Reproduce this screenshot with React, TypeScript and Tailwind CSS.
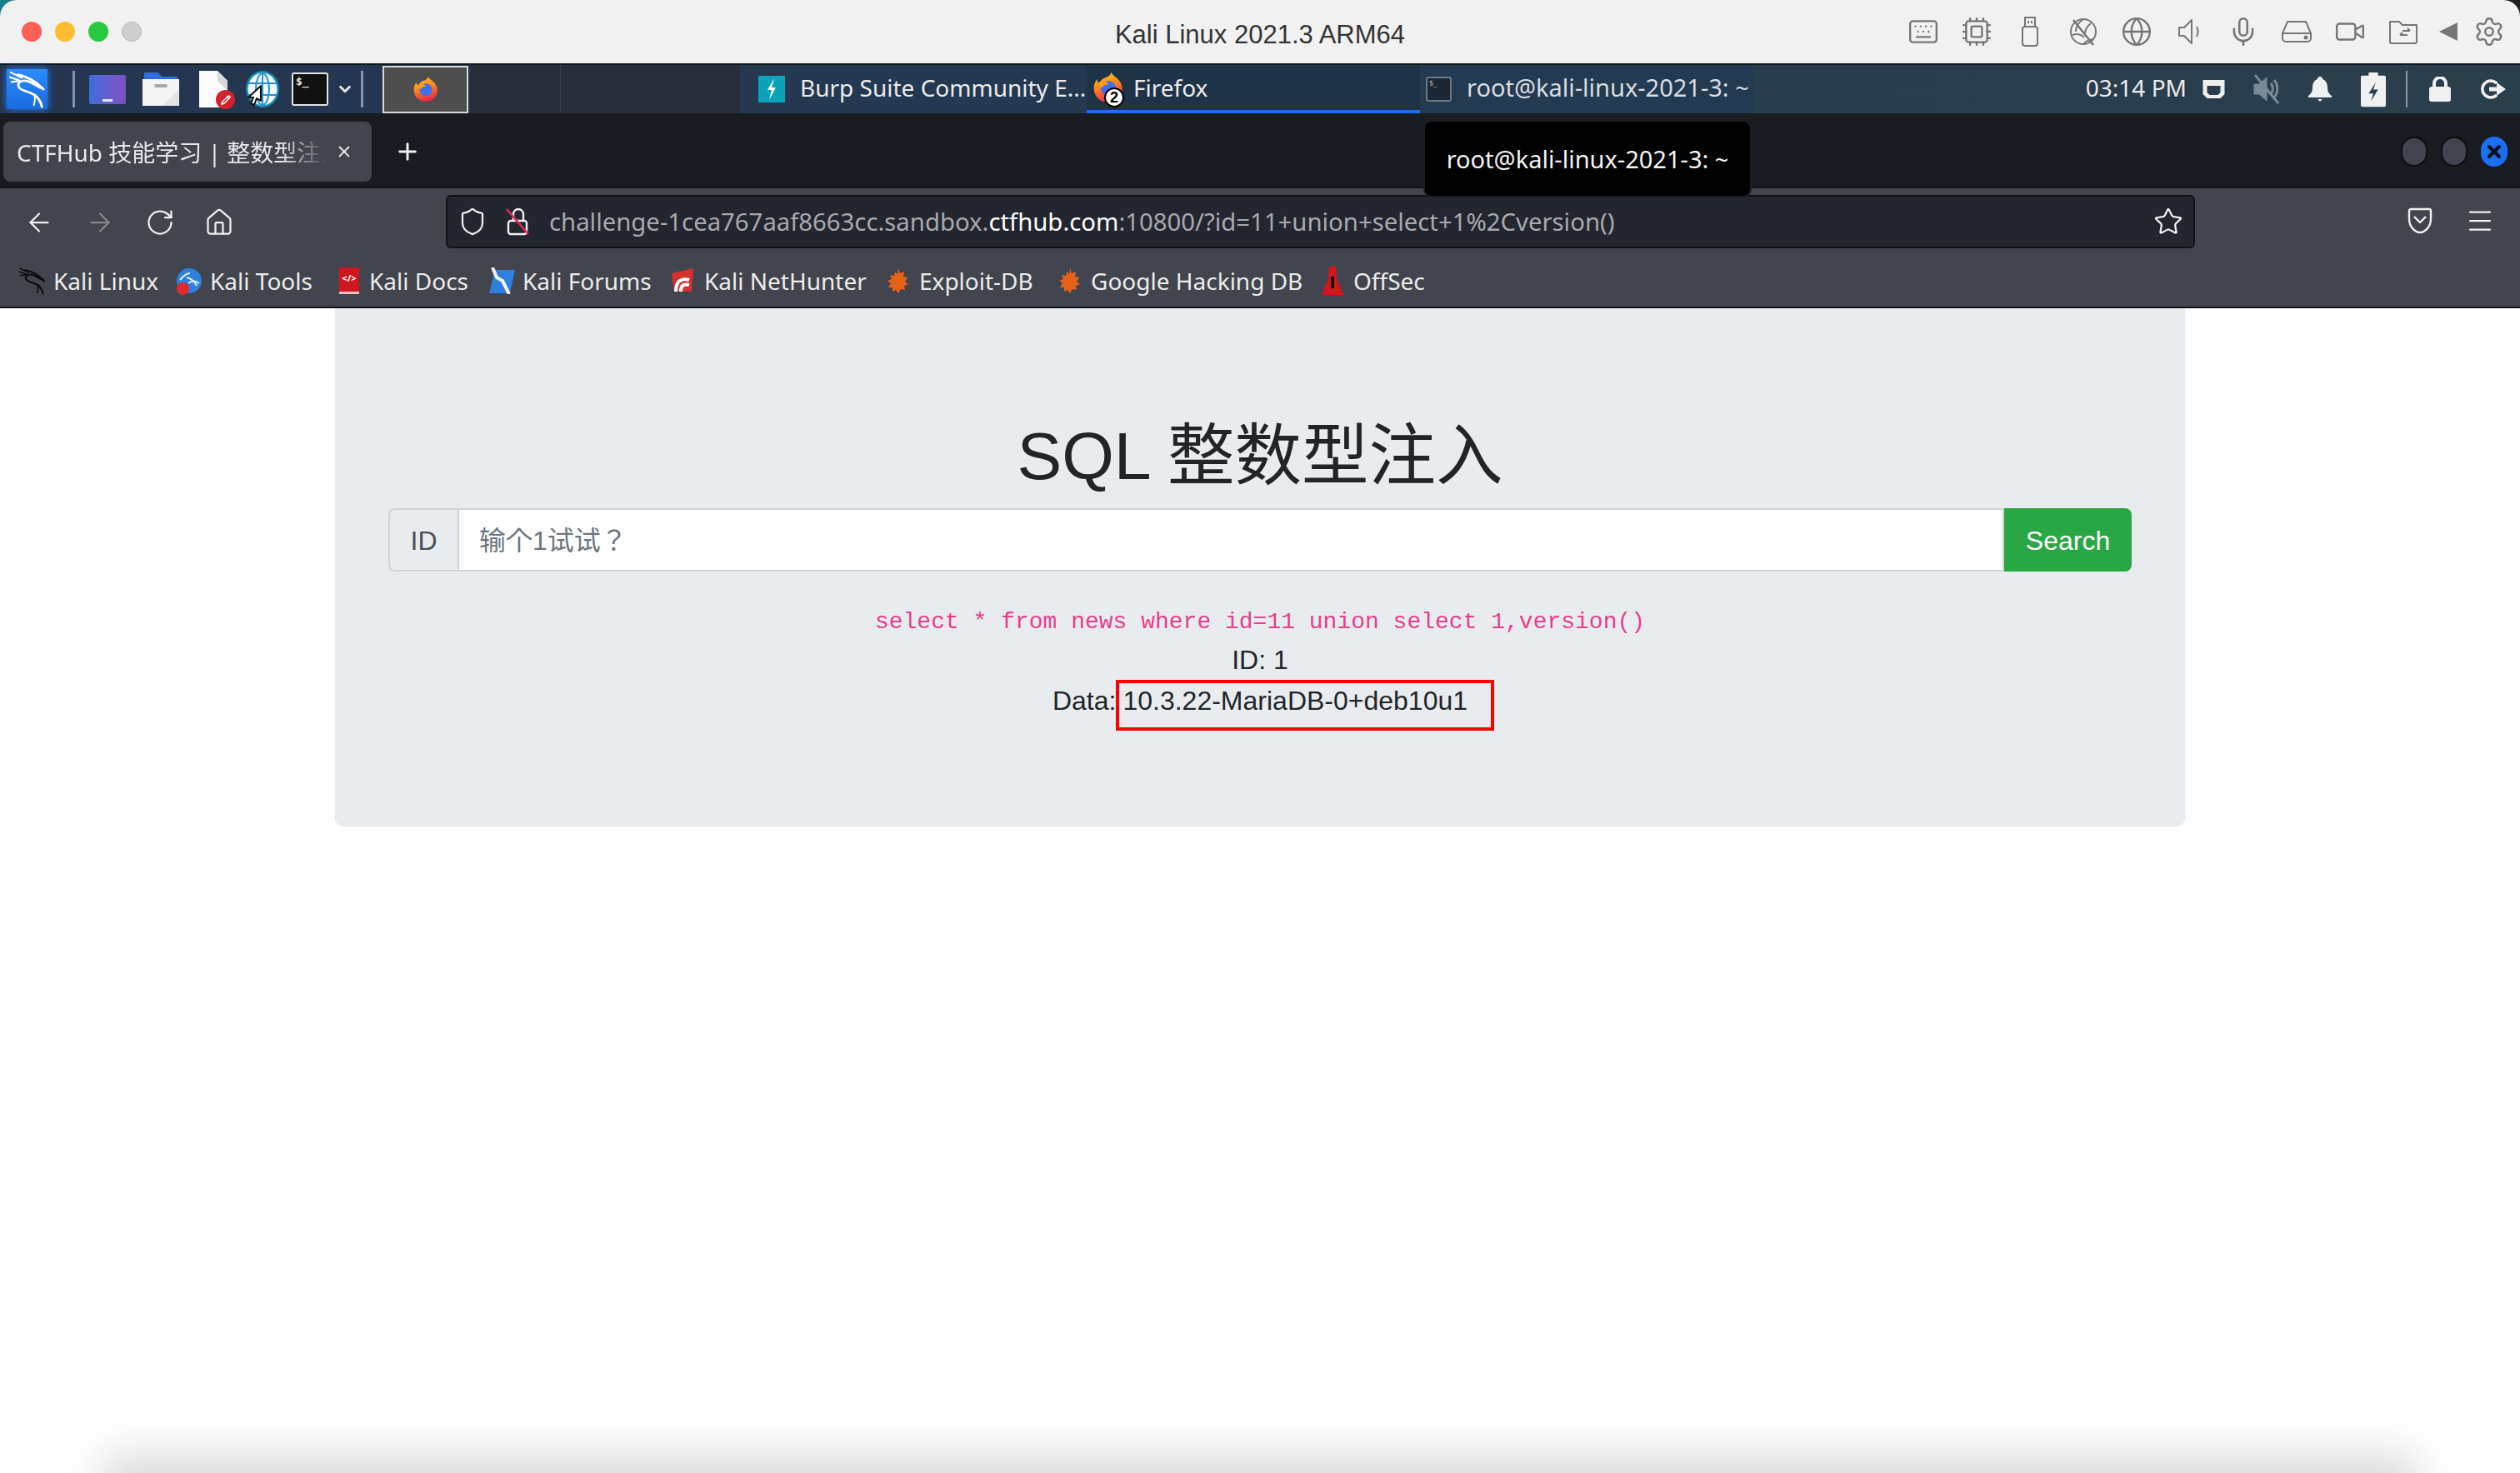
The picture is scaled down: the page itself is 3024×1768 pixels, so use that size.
import React from "react";
import { ArrowLeft, ArrowRight, RotateCw, House, Shield, Star, Menu, Keyboard, Cpu, Globe, Mic, Video, Settings, Plus, X, ChevronDown, Pencil } from "lucide-react";

const sans = "font-['Liberation_Sans','Noto_Sans_CJK_SC',sans-serif]";
const ui = "font-['Noto_Sans','Noto_Sans_CJK_SC',sans-serif]";

function Firefox({ s = 40 }: { s?: number }) {
  return (
    <svg width={s} height={s} viewBox="0 0 40 40">
      <defs>
        <linearGradient id="ffg" x1="0.3" y1="0" x2="0.6" y2="1">
          <stop offset="0" stopColor="#ffc21f" />
          <stop offset="0.5" stopColor="#ff7a1f" />
          <stop offset="1" stopColor="#e5244f" />
        </linearGradient>
      </defs>
      <path d="M24 0c1 4 9 7 12 13 5 9 2 20-6 24-9 5-20 3-26-5C-1 24 0 15 5 9c0 3 1 5 3 6 1-5 6-8 10-9 3-1 5-3 6-6z" fill="url(#ffg)" />
      <circle cx="20" cy="21" r="10" fill="#3f6fe8" />
      <path d="M7 13c6-3 11-2 13 3-4 0-7 1-8 4-2-1-5-3-5-7z" fill="#ff9a1f" />
    </svg>
  );
}

function KaliDragon({ color = "white", w = 48 }: { color?: string; w?: number }) {
  return (
    <svg width={w} height={w} viewBox="0 0 48 48" fill="none" stroke={color} strokeWidth="3" strokeLinecap="round" strokeLinejoin="round">
      <path d="M3 3l14 7M2 9l12 4M4 15l8-1" strokeWidth="2.2" />
      <path d="M12 6c12 2 22 8 32 18-8-3-13-8-20-10-8-2-13 2-11 7 2 6 14 5 22 12 4 4 6 8 7 13" />
      <path d="M33 32c1 5 0 9-1 12" strokeWidth="2" />
    </svg>
  );
}

function LauncherIcons() {
  return (
    <div className="flex items-center h-full w-[564px] bg-[#253650] relative">
      <div className="ml-[8px] w-[49px] h-[48px] bg-gradient-to-b from-[#2a8cff] to-[#1a6be0] shadow-[0_0_8px_#2a7fff] flex items-center justify-center">
        <KaliDragon w={46} />
      </div>
      <div className="ml-[30px] w-[3px] h-[44px] bg-[#8b94a0]" />
      <div className="ml-[17px] w-[44px] h-[35px] rounded-[2px] bg-gradient-to-r from-[#3a6de0] to-[#7d4fc0] flex items-end justify-center pb-[3px]">
        <span className="w-[12px] h-[3px] bg-[#dfe6ff]" />
      </div>
      <svg className="ml-[20px]" width="44" height="40" viewBox="0 0 44 40">
        <path d="M2 0h17l4 5h19v4H2z" fill="#2f6fe0" />
        <path d="M0 8h44v32H0z" fill="#f4f4f4" />
        <path d="M44 20v20H24z" fill="#e4e4e4" />
        <rect x="14" y="14" width="16" height="4" rx="2" fill="#a8a8a8" />
      </svg>
      <div className="ml-[24px] relative w-[40px] h-[44px]">
        <svg width="34" height="44" viewBox="0 0 34 44">
          <path d="M0 0h22l12 12v32H0z" fill="#fafafa" />
          <path d="M22 0l12 12v12L22 12z" fill="#d8d8d8" />
        </svg>
        <span className="absolute right-[-3px] bottom-[-2px] w-[23px] h-[23px] rounded-full bg-[#d3232a] flex items-center justify-center">
          <Pencil size={12} color="white" strokeWidth={3} />
        </span>
      </div>
      <div className="ml-[16px] relative w-[40px] h-[44px]">
        <svg width="40" height="44" viewBox="0 0 40 44" fill="none">
          <ellipse cx="20" cy="22" rx="20" ry="22" fill="#0f8fb0" />
          <ellipse cx="20" cy="22" rx="17.5" ry="19.5" fill="#f0f8fc" />
          <g stroke="#2a8fcc" strokeWidth="2">
            <ellipse cx="20" cy="22" rx="8" ry="19" />
            <path d="M20 3v38M3 15h34M3 29h34" />
          </g>
          <path d="M18 18v18l-5-3-3 8-4-2 3-7-6 0z" fill="#fff" stroke="#111" strokeWidth="2" strokeLinejoin="round" />
        </svg>
      </div>
      <div className="ml-[15px] w-[44px] h-[40px] bg-[#111] border-[2px] border-[#e4e4e4] rounded-[3px] text-[#eee] font-['DejaVu_Sans_Mono',monospace] text-[13px] leading-[18px] pl-[3px] font-bold">$_</div>
      <ChevronDown className="ml-[9px]" size={22} color="#eaeaea" strokeWidth={3} />
      <div className="ml-[8px] w-[3px] h-[44px] bg-[#8b94a0]" />
      <div className="ml-[23px] w-[103px] h-[57px] bg-[#4e4e4e] border-[2px] border-[#d8d8d8] flex items-center justify-center">
        <Firefox s={30} />
      </div>
    </div>
  );
}

function TopGray() {
  const c = "#767676";
  const cls = "w-[64px] flex items-center justify-center";
  return (
    <div className="flex items-center justify-end pr-[1px]">
      <div className={cls}><Keyboard size={38} color={c} strokeWidth={1.5} /></div>
      <div className={cls}><Cpu size={38} color={c} strokeWidth={1.5} /></div>
      <div className={cls}>
        <svg width="22" height="36" viewBox="0 0 22 36" fill="none" stroke={c} strokeWidth="2">
          <rect x="5" y="1" width="12" height="11" /><rect x="2" y="12" width="18" height="23" rx="3" /><path d="M9 5v3M13 5v3" />
        </svg>
      </div>
      <div className={cls}>
        <svg width="36" height="36" viewBox="0 0 36 36" fill="none" stroke={c} strokeWidth="2">
          <circle cx="18" cy="18" r="15" /><path d="M6 4l24 30" strokeWidth="2.6" /><path d="M18 3c-6 4-9 9-9 15M27 8c-5 4-7 8-7 12M5 22c6-2 10-1 14 3M19 32c2-3 6-4 11-5" />
        </svg>
      </div>
      <div className={cls}><Globe size={38} color={c} strokeWidth={1.5} /></div>
      <div className={cls}>
        <svg width="30" height="30" viewBox="0 0 30 30" fill="none" stroke={c} strokeWidth="2" strokeLinejoin="round">
          <path d="M2 10h6l9-9v28l-9-9H2zM23 9c2 4 2 8 0 12" />
        </svg>
      </div>
      <div className={cls}><Mic size={38} color={c} strokeWidth={1.6} /></div>
      <div className={cls}>
        <svg width="38" height="28" viewBox="0 0 38 28" fill="none" stroke={c} strokeWidth="2">
          <path d="M8 2h22l6 14v6a4 4 0 0 1-4 4H6a4 4 0 0 1-4-4v-6zM2 16h34" /><circle cx="30" cy="21" r="1.5" fill={c} />
        </svg>
      </div>
      <div className={cls}><Video size={38} color={c} strokeWidth={1.5} /></div>
      <div className={cls}>
        <svg width="36" height="30" viewBox="0 0 36 30" fill="none" stroke={c} strokeWidth="2" strokeLinejoin="round">
          <path d="M2 27V3h11l4 4h17v20a2 2 0 0 1-2 2H4a2 2 0 0 1-2-2zM14 19h9M14 19l3-3M26 14h-9M26 14l-3-3" />
        </svg>
      </div>
      <svg className="ml-[11px]" width="22" height="22" viewBox="0 0 22 22"><path d="M22 0v22L0 11z" fill={c} /></svg>
      <div className="ml-[2px] w-[72px] flex items-center justify-center"><Settings size={38} color={c} strokeWidth={1.5} /></div>
    </div>
  );
}

function TaskTab({ className, children }: { className: string; children: React.ReactNode }) {
  return <div className={`relative flex items-center h-full ${className}`}>{children}</div>;
}

function Panel() {
  const slot = "w-[64px] flex items-center justify-center";
  return (
    <div className={`flex h-[60px] border-t-[2px] border-[#101820] ${ui} text-[#ececec]`}>
      <LauncherIcons />
      <div className="w-[324px] h-full bg-[#2a2d3a] pl-[108px]"><div className="w-[1px] h-full bg-[#3b3e4a]" /></div>
      <TaskTab className="w-[416px] bg-[#24384f] pl-[22px] text-[28px]">
        <svg width="32" height="32" viewBox="0 0 32 32"><rect width="32" height="32" fill="#0aa3b8" /><path d="M19 3l-8 14h5l-3 12 8-15h-5z" fill="#fff" /></svg>
        <span className="ml-[18px] -mt-[5px] whitespace-nowrap">Burp Suite Community E...</span>
      </TaskTab>
      <TaskTab className="w-[400px] bg-[#1f3347] pl-[8px] text-[28px]">
        <div className="relative w-[40px] h-[40px]">
          <Firefox s={36} />
          <span className={`absolute left-[13px] top-[18px] w-[24px] h-[24px] rounded-full bg-white border-[2px] border-black text-black text-[18px] leading-[20px] text-center font-bold ${sans}`}>2</span>
        </div>
        <span className="ml-[8px] -mt-[5px]">Firefox</span>
        <div className="absolute left-0 right-0 bottom-0 h-[4px] bg-[#1a6ef0]" />
      </TaskTab>
      <TaskTab className="w-[400px] bg-[#233a50] pl-[7px] text-[29px]">
        <div className="w-[31px] h-[30px] bg-[#1c2733] border-[2px] border-[#707a84] rounded-[3px] text-[#aaa] text-[9px] leading-[12px] pl-[2px]">$_</div>
        <span className="ml-[18px] -mt-[5px] whitespace-nowrap text-[#d8dde2]">root@kali-linux-2021-3: ~</span>
      </TaskTab>
      <div className="flex-1 h-full bg-gradient-to-r from-[#2a3d4e] to-[#2a3e4c] flex items-center justify-end">
        <span className="-mt-[5px] whitespace-nowrap text-[28px]">03:14 PM</span>
        <div className={slot}><svg width="29" height="24" viewBox="0 0 28 24"><path d="M1 1h26v17l-5 5H6l-5-5z" fill="#eee" /><path d="M6 8h16v8l-3 3H9l-3-3z" fill="#2a3d4e" /></svg></div>
        <div className={slot}><svg width="36" height="36" viewBox="0 0 36 36" fill="none" stroke="#7a8a94"><path d="M3 12h6l9-8v28l-9-8H3z" fill="#7a8a94" /><path d="M23 11c3 4 3 9 0 13M27 7c5 6 5 15 0 21" strokeWidth="3" /><path d="M4 1l28 34" strokeWidth="3" /></svg></div>
        <div className={slot}><svg width="28" height="30" viewBox="0 0 28 30"><path d="M14 0c2 0 3 1 3 3 5 2 6 6 6 11 0 4 2 7 5 9v2H0v-2c3-2 5-5 5-9 0-5 1-9 6-11 0-2 1-3 3-3z" fill="#f0f0f0" /><path d="M11 27h6l-3 3z" fill="#f0f0f0" /></svg></div>
        <div className={slot}><svg width="30" height="43" viewBox="0 0 32 44"><path d="M10 0h12v4h8a2 2 0 0 1 2 2v36a2 2 0 0 1-2 2H2a2 2 0 0 1-2-2V6a2 2 0 0 1 2-2h8z" fill="#f0f0f0" /><path d="M19 13l-9 14h6l-3 10 9-15h-6z" fill="#2a3d4e" /></svg></div>
        <div className="w-[16px] flex justify-center"><div className="w-[2px] h-[44px] bg-[#8c98a2]" /></div>
        <div className={slot}><svg width="26" height="30" viewBox="0 0 26 30" fill="none"><path d="M6 14V8a7 7 0 0 1 14 0v6" stroke="#f0f0f0" strokeWidth="4" /><rect y="12" width="26" height="18" rx="3" fill="#f0f0f0" /></svg></div>
        <div className={slot}><svg width="30" height="24" viewBox="0 0 30 24" fill="none" stroke="#f0f0f0" strokeWidth="3.5"><path d="M19 5a10 10 0 1 0 0 14" /><path d="M10 12h10" strokeWidth="5" /><path d="M19 4l11 8-11 8z" fill="#f0f0f0" stroke="none" /></svg></div>
      </div>
    </div>
  );
}

function TabBar() {
  return (
    <div className={`relative flex items-center h-[90px] pt-[4px] bg-[#181b20] border-b-[2px] border-[#111317] ${ui}`}>
      <div className="ml-[4px] w-[442px] h-[72px] rounded-[8px] bg-[#42454e] flex items-center pl-[16px] text-[#e8e8ea] text-[28px]">
        <span className="w-[372px] mt-[2px] overflow-hidden whitespace-nowrap [mask-image:linear-gradient(to_right,black_85%,transparent)]">CTFHub 技能学习 | 整数型注入</span>
        <X className="ml-[10px]" size={22} strokeWidth={2} />
      </div>
      <Plus className="ml-[27px]" size={32} color="#f0f0f0" strokeWidth={2.2} />
      <div className="ml-auto mr-[15px] flex gap-[16px]">
        <span className="w-[32px] h-[36px] rounded-full bg-[#41444f] border-[2px] border-[#0d0e11]" />
        <span className="w-[32px] h-[36px] rounded-full bg-[#41444f] border-[2px] border-[#0d0e11]" />
        <span className="w-[32px] h-[36px] rounded-full bg-[#1a6ef0] flex items-center justify-center"><X size={24} color="#061018" strokeWidth={4} /></span>
      </div>
      <div className="absolute left-[1708px] top-[8px] w-[394px] h-[93px] rounded-[10px] bg-black border-[2px] border-[#1a1d22] flex items-center justify-center text-[29px] text-[#f4f4f4] whitespace-nowrap z-10">root@kali-linux-2021-3: ~</div>
    </div>
  );
}

function NavBar() {
  const c = "#f0f0f2";
  return (
    <div className={`flex items-center h-[70px] bg-[#42454d] ${ui}`}>
      <ArrowLeft className="ml-[29px] mt-[12px]" size={36} color={c} strokeWidth={1.5} />
      <ArrowRight className="ml-[37px] mt-[12px]" size={36} color="#85878d" strokeWidth={1.5} />
      <RotateCw className="ml-[36px] mt-[12px]" size={36} color={c} strokeWidth={1.5} />
      <House className="ml-[35px] mt-[12px]" size={36} color={c} strokeWidth={1.5} />
      <div className="ml-[254px] mt-[10px] w-[2099px] h-[64px] rounded-[6px] bg-[#23252f] border-[2px] border-[#101114] flex items-center text-[29.3px] text-[#a8a9ae] z-[1]">
        <Shield className="ml-[12px]" size={36} color={c} strokeWidth={1.5} />
        <svg className="ml-[22px]" width="28" height="34" viewBox="0 0 28 34" fill="none" stroke={c} strokeWidth="2.4">
          <rect x="3" y="16" width="22" height="16" rx="3" /><path d="M9 16V8a6 6 0 0 1 12 0v8" />
          <path d="M1 2l26 30" stroke="#e22850" strokeWidth="2.6" />
        </svg>
        <span className="ml-[24px] mt-[2px] whitespace-nowrap">challenge-1cea767aaf8663cc.sandbox.<span className="text-white">ctfhub.com</span>:10800/?id=11+union+select+1%2Cversion()</span>
        <Star className="ml-auto mr-[12px]" size={36} color={c} strokeWidth={1.5} />
      </div>
      <svg className="ml-[255px] mt-[8px]" width="30" height="32" viewBox="0 0 30 32" fill="none" stroke={c} strokeWidth="2.4" strokeLinejoin="round"><path d="M2 4a2 2 0 0 1 2-2h22a2 2 0 0 1 2 2v10c0 9-7 16-13 16S2 23 2 14z" /><path d="M8 11l7 7 7-7" /></svg>
      <Menu className="ml-[39px] mt-[8px]" size={36} color={c} strokeWidth={1.5} />
    </div>
  );
}

function Bookmark({ icon, label, w, slot }: { icon: React.ReactNode; label: string; w: string; slot: string }) {
  return (
    <div className={`flex items-center shrink-0 ${w}`}>
      <div className={`flex items-center shrink-0 ${slot}`}>{icon}</div>
      <span className="whitespace-nowrap">{label}</span>
    </div>
  );
}

function Flame() {
  return (
    <svg width="27" height="30" viewBox="0 0 27 30">
      <path d="M15 0l2 6 5-2-1 6 5 1-3 5 4 3-5 2 1 5-5-1-3 5-3-4-4 2 0-5-5 0 3-5-4-3 5-2-2-5 5 1 1-5 3 3z" fill="#e4621a" />
    </svg>
  );
}

function Bookmarks() {
  return (
    <div className={`flex items-center h-[74px] pt-[10px] pl-[22px] bg-[#42454d] border-b-[2px] border-[#0f1013] ${ui} text-[28px] text-[#ececec]`}>
      <Bookmark w="w-[190px]" slot="w-[42px]" label="Kali Linux" icon={<KaliDragon color="#0b0b0b" w={34} />} />
      <Bookmark w="w-[195px]" slot="w-[40px]" label="Kali Tools" icon={
        <span className="relative w-[30px] h-[30px] rounded-full bg-[#2d7fe0] block overflow-visible">
          <svg className="absolute left-0 top-0" width="30" height="30" viewBox="0 0 30 30" fill="none" stroke="#dff0ff" strokeWidth="2"><path d="M4 14c5-6 9-8 12-8M14 18c4-3 9-3 13 0M12 11c5 1 9 4 12 10" /></svg>
          <span className="absolute left-[0px] bottom-[-2px] w-[15px] h-[15px] rounded-full bg-[#e02b2b]" />
        </span>} />
      <Bookmark w="w-[180px]" slot="w-[36px]" label="Kali Docs" icon={
        <span className="block w-[24px] h-[32px] bg-[#d0161e] border-b-[3px] border-[#f0c0c0] text-white text-[11px] leading-[26px] text-center font-bold">&lt;/&gt;</span>} />
      <Bookmark w="w-[216px]" slot="w-[40px]" label="Kali Forums" icon={
        <svg width="31" height="32" viewBox="0 0 31 32"><path d="M7 3h24l-6 28H0z" fill="#2d7fe0" /><path d="M4 0l5 12 7 4 8 16" stroke="#f4f4f4" strokeWidth="4" fill="none" /></svg>} />
      <Bookmark w="w-[260px]" slot="w-[42px]" label="Kali NetHunter" icon={
        <svg width="32" height="30" viewBox="0 0 32 30"><path d="M3 6l26-6-2 28H6z" fill="#d92f2f" /><path d="M8 28c0-12 6-17 16-14M14 28c0-7 3-10 10-8" stroke="#fff" strokeWidth="4" fill="none" /></svg>} />
      <Bookmark w="w-[206px]" slot="w-[40px]" label="Exploit-DB" icon={<Flame />} />
      <Bookmark w="w-[317px]" slot="w-[40px]" label="Google Hacking DB" icon={<Flame />} />
      <Bookmark w="w-[140px]" slot="w-[38px]" label="OffSec" icon={
        <svg width="26" height="34" viewBox="0 0 26 34"><path d="M9 0h8l1 14 8 20H0l8-20z" fill="#d4151c" /><path d="M13 12v14" stroke="#111" strokeWidth="4" /></svg>} />
    </div>
  );
}

function Page() {
  return (
    <div className={`flex-1 bg-white ${sans}`}>
      <div className="mx-auto w-[2220px] h-[622px] bg-[#e9ecef] rounded-b-[10px] px-[64px] pt-[137px] text-[#212529]">
        <h1 className="text-center text-[80.5px] leading-[80px] font-normal">SQL 整数型注入</h1>
        <div className="mt-[23px] flex h-[76px] text-[32px]">
          <div className="w-[83px] pt-[2px] flex items-center justify-center bg-[#e9ecef] border-[2px] border-r-0 border-[#ced4da] rounded-l-[8px] text-[#495057]">ID</div>
          <div className="flex-1 pt-[2px] bg-white border-[2px] border-[#ced4da] flex items-center pl-[24px] text-[#6c757d] text-[32px] font-['Liberation_Sans','Noto_Sans_CJK_JP',sans-serif]">输个1试试？</div>
          <div className="w-[153px] pt-[2px] flex items-center justify-center bg-[#28a745] text-white rounded-r-[8px]">Search</div>
        </div>
        <div className="mt-[42px] text-center">
          <div className="text-[28px] leading-[38px] text-[#e83e8c] font-['Liberation_Mono',monospace]">select * from news where id=11 union select 1,version()</div>
          <div className="mt-[2px] text-[32px] leading-[49px]">ID: 1</div>
          <div className="text-[32px] leading-[48px]">
            Data:<span className="relative ml-[8px]">10.3.22-MariaDB-0+deb10u1<span className="absolute left-[-8px] right-[-32px] top-[-7px] h-[61px] border-[4px] border-[#f00]" /></span>
          </div>
        </div>
      </div>
    </div>
  );
}

export default function App() {
  return (
    <div className="relative w-[3024px] h-[1768px] overflow-hidden bg-white flex flex-col">
      <div className="absolute left-0 top-0 w-[40px] h-[40px] bg-[#1a7f8a]" />
      <div className="absolute right-0 top-0 w-[40px] h-[40px] bg-[#222]" />
      <div className={`relative grid grid-cols-[1fr_auto_1fr] items-center h-[76px] bg-[#f1f1f1] rounded-t-[20px] ${sans}`}>
        <div className="flex items-center gap-[16px] pl-[26px]">
          <span className="w-[24px] h-[24px] rounded-full bg-[#ff5f57]" />
          <span className="w-[24px] h-[24px] rounded-full bg-[#febc2e]" />
          <span className="w-[24px] h-[24px] rounded-full bg-[#28c840]" />
          <span className="w-[24px] h-[24px] rounded-full bg-[#cfcfcf] border border-[#b5b5b5]" />
        </div>
        <div className="text-[31px] text-[#333] mt-[8px]">Kali Linux 2021.3 ARM64</div>
        <TopGray />
      </div>
      <Panel />
      <TabBar />
      <NavBar />
      <Bookmarks />
      <Page />
      <div className="absolute left-[150px] right-[150px] top-[1772px] h-[40px] shadow-[0_0_50px_28px_rgba(0,0,0,0.14)]" />
    </div>
  );
}
